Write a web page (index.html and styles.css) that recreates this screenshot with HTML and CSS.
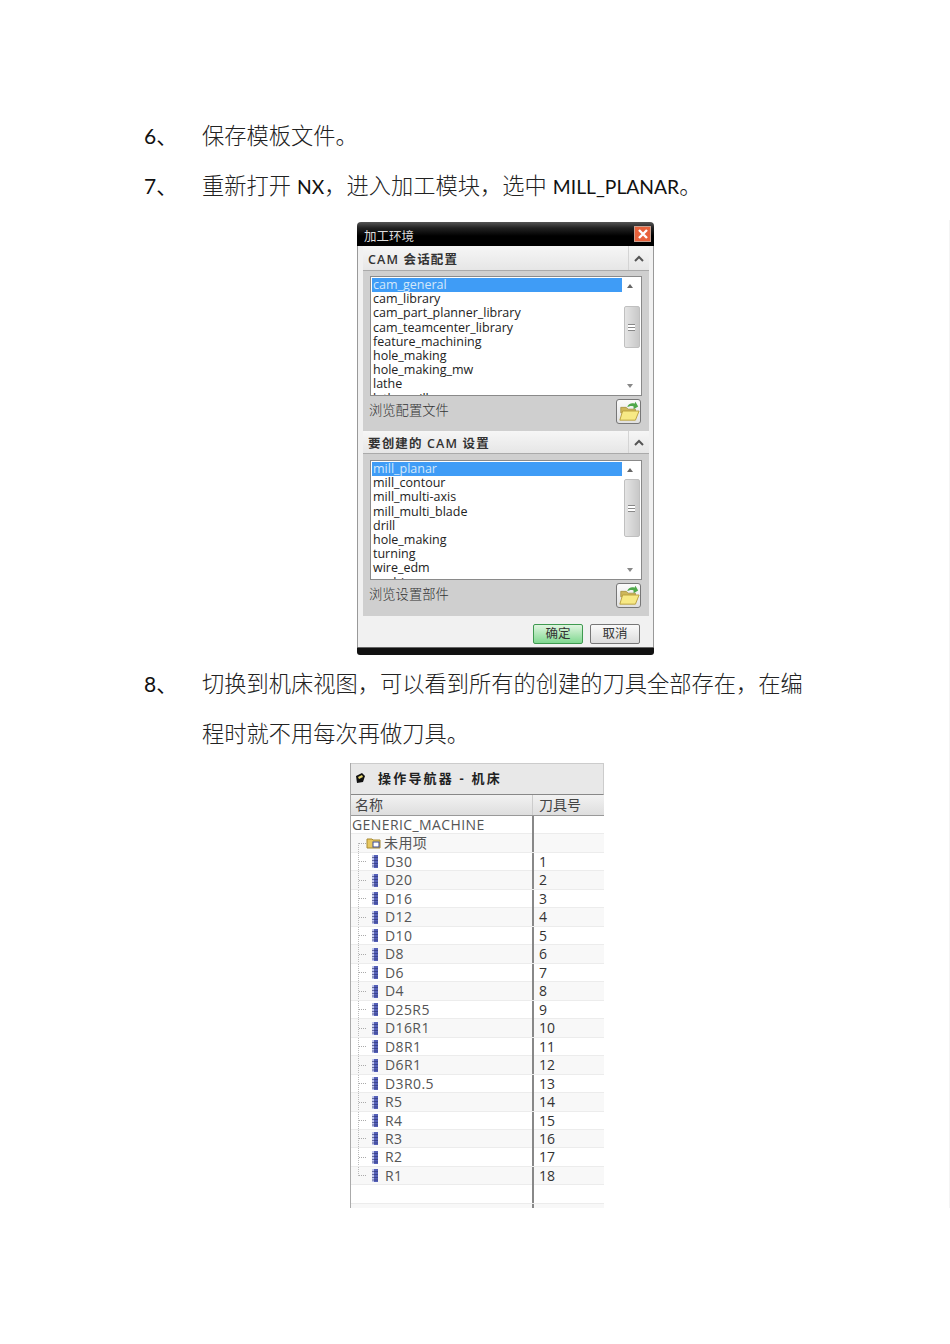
FILE: index.html
```html
<!DOCTYPE html>
<html lang="zh-CN">
<head>
    <meta charset="UTF-8">
    <title>保存模板文件</title>
    <link rel="stylesheet" href="styles.css">
</head>
<body>
<svg class="sprites" width="0" height="0">
    <symbol id="folder-open" viewBox="0 0 24 24">
        <path d="M3 8h6l2 2h8v4H3z" fill="#cdb65a" stroke="#a08a3a" stroke-width="0.8"/>
        <path d="M2 22 5 12h18l-4 10z" fill="#f7e985" stroke="#b89c3a" stroke-width="1"/>
        <path d="M10 8c1-4 5-5 8-4l1-2 3 5-5 3 0-3c-3-1-5 0-7 1z" fill="#4fa84a"/>
    </symbol>
    <symbol id="tool" viewBox="0 0 8 13" preserveAspectRatio="none">
        <rect x="1" y="0" width="6" height="13" fill="#5560b8"/>
        <rect x="1" y="0" width="2" height="13" fill="#c0c6ec"/>
        <path d="M1 2.5h6M1 5.5h6M1 8.5h6M1 11h6" stroke="#2a3070" stroke-width="0.6"/>
    </symbol>
</svg>

<main class="page">
    <div class="step"><span class="num">6、</span><p>保存模板文件。</p></div>
    <div class="step"><span class="num">7、</span><p>重新打开 <span class="latin">NX</span>，进入加工模块，选中 <span class="latin">MILL_PLANAR</span>。</p></div>

    <section class="dialog">
        <div class="titlebar">
            <span>加工环境</span>
            <span class="close">
                <svg width="10" height="10" viewBox="0 0 10 10"><path d="M1 1l8 8M9 1l-8 8" stroke="#fff" stroke-width="2.4"/></svg>
            </span>
        </div>
        <div class="dialog-body">
            <div class="group-head">
                <span>CAM 会话配置</span>
                <span class="chev"><svg width="10" height="7" viewBox="0 0 10 7"><path d="M1 6l4-4 4 4" fill="none" stroke="#555" stroke-width="2"/></svg></span>
            </div>
            <div class="group group-first">
                <div class="listbox">
                    <ul class="items">
                        <li class="selected">cam_general</li>
                        <li>cam_library</li>
                        <li>cam_part_planner_library</li>
                        <li>cam_teamcenter_library</li>
                        <li>feature_machining</li>
                        <li>hole_making</li>
                        <li>hole_making_mw</li>
                        <li>lathe</li>
                        <li>lathe_mill</li>
                    </ul>
                    <div class="scrollbar">
                        <i class="arrow up"></i>
                        <div class="thumb thumb-a"><b></b></div>
                        <i class="arrow down"></i>
                    </div>
                </div>
                <div class="browse">
                    <span>浏览配置文件</span>
                    <button class="folder-btn"><svg width="22" height="22"><use href="#folder-open"/></svg></button>
                </div>
            </div>

            <div class="group-head group-head-short">
                <span>要创建的 CAM 设置</span>
                <span class="chev"><svg width="10" height="7" viewBox="0 0 10 7"><path d="M1 6l4-4 4 4" fill="none" stroke="#555" stroke-width="2"/></svg></span>
            </div>
            <div class="group group-second">
                <div class="listbox">
                    <ul class="items">
                        <li class="selected">mill_planar</li>
                        <li>mill_contour</li>
                        <li>mill_multi-axis</li>
                        <li>mill_multi_blade</li>
                        <li>drill</li>
                        <li>hole_making</li>
                        <li>turning</li>
                        <li>wire_edm</li>
                        <li>probing</li>
                    </ul>
                    <div class="scrollbar">
                        <i class="arrow up"></i>
                        <div class="thumb thumb-b"><b></b></div>
                        <i class="arrow down"></i>
                    </div>
                </div>
                <div class="browse">
                    <span>浏览设置部件</span>
                    <button class="folder-btn"><svg width="22" height="22"><use href="#folder-open"/></svg></button>
                </div>
            </div>

            <div class="actions">
                <button class="btn btn-ok">确定</button>
                <button class="btn">取消</button>
            </div>
        </div>
        <div class="dialog-foot"></div>
    </section>

    <div class="step step-tall">
        <span class="num">8、</span>
        <p>切换到机床视图，可以看到所有的创建的刀具全部存在，在编程时就不用每次再做刀具。</p>
    </div>

    <section class="navigator">
        <div class="nav-title">
            <svg width="12" height="12" viewBox="0 0 12 12"><path d="M2 4 8 1l3 3-2 6-6 1z" fill="#111"/><path d="M4 5l4-2 1 2-4 2z" fill="#e8d870"/></svg>
            <span>操作导航器 - 机床</span>
        </div>
        <div class="nav-cols"><span>名称</span><span>刀具号</span></div>
        <div class="tree">
            <div class="row"><span class="root">GENERIC_MACHINE</span><span></span></div>
            <div class="row"><span class="leaf leaf-first"><svg width="15" height="12" viewBox="0 0 15 12"><path d="M1 2h5l1 1h7v8H1z" fill="#e8c860" stroke="#a88a30"/><rect x="7" y="5" width="6" height="5" fill="#fff" stroke="#3a4a9a"/></svg>未用项</span><span></span></div>
            <div class="row"><span class="leaf"><svg class="tool" width="8" height="13"><use href="#tool"/></svg>D30</span><span>1</span></div>
            <div class="row"><span class="leaf"><svg class="tool" width="8" height="13"><use href="#tool"/></svg>D20</span><span>2</span></div>
            <div class="row"><span class="leaf"><svg class="tool" width="8" height="13"><use href="#tool"/></svg>D16</span><span>3</span></div>
            <div class="row"><span class="leaf"><svg class="tool" width="8" height="13"><use href="#tool"/></svg>D12</span><span>4</span></div>
            <div class="row"><span class="leaf"><svg class="tool" width="8" height="13"><use href="#tool"/></svg>D10</span><span>5</span></div>
            <div class="row"><span class="leaf"><svg class="tool" width="8" height="13"><use href="#tool"/></svg>D8</span><span>6</span></div>
            <div class="row"><span class="leaf"><svg class="tool" width="8" height="13"><use href="#tool"/></svg>D6</span><span>7</span></div>
            <div class="row"><span class="leaf"><svg class="tool" width="8" height="13"><use href="#tool"/></svg>D4</span><span>8</span></div>
            <div class="row"><span class="leaf"><svg class="tool" width="8" height="13"><use href="#tool"/></svg>D25R5</span><span>9</span></div>
            <div class="row"><span class="leaf"><svg class="tool" width="8" height="13"><use href="#tool"/></svg>D16R1</span><span>10</span></div>
            <div class="row"><span class="leaf"><svg class="tool" width="8" height="13"><use href="#tool"/></svg>D8R1</span><span>11</span></div>
            <div class="row"><span class="leaf"><svg class="tool" width="8" height="13"><use href="#tool"/></svg>D6R1</span><span>12</span></div>
            <div class="row"><span class="leaf"><svg class="tool" width="8" height="13"><use href="#tool"/></svg>D3R0.5</span><span>13</span></div>
            <div class="row"><span class="leaf"><svg class="tool" width="8" height="13"><use href="#tool"/></svg>R5</span><span>14</span></div>
            <div class="row"><span class="leaf"><svg class="tool" width="8" height="13"><use href="#tool"/></svg>R4</span><span>15</span></div>
            <div class="row"><span class="leaf"><svg class="tool" width="8" height="13"><use href="#tool"/></svg>R3</span><span>16</span></div>
            <div class="row"><span class="leaf"><svg class="tool" width="8" height="13"><use href="#tool"/></svg>R2</span><span>17</span></div>
            <div class="row"><span class="leaf leaf-last"><svg class="tool" width="8" height="13"><use href="#tool"/></svg>R1</span><span>18</span></div>
            <div class="row"><span></span><span></span></div>
            <div class="row"><span></span><span></span></div>
        </div>
    </section>
</main>
</body>
</html>
```

FILE: styles.css
```css
* {
    box-sizing: border-box;
}

html, body {
    margin: 0;
    padding: 0;
    background: #fff;
}

body {
    font-family: 'Lato', 'Noto Sans CJK SC', sans-serif;
    color: #111;
    height: 1344px;
    overflow: hidden;
}

.sprites {
    position: absolute;
}

.page {
    padding: 111px 0 0 144px;
    width: 950px;
    height: 1344px;
    /* faint scan edge down the right side */
    background: linear-gradient(#f4f4f4, #f4f4f4) right 0 top 220px / 1px 988px no-repeat;
}

/* numbered text */
.step {
    display: grid;
    grid-template-columns: 58px 604px;
    font-size: 22.25px;
    line-height: 50px;
}

.step p {
    margin: 0;
    font-weight: 300;
    color: #222;
}

.latin {
    font-size: 19.3px;
    font-weight: 400;
    line-height: 1;
    color: #111;
}

.num {
    font-size: 21px;
}

.step-tall {
    margin-top: 4px;
}

/* dialog */
.dialog {
    width: 297px;
    height: 433px;
    margin: 11px 0 4px 213px;
    display: flex;
    flex-direction: column;
    font-family: 'Open Sans', 'Noto Sans CJK SC', sans-serif;
}

.titlebar {
    height: 24px;
    background: linear-gradient(#555 0, #222 6px, #000 14px);
    border-radius: 4px 4px 0 0;
    color: #ddd;
    font-size: 12.5px;
    padding: 4px 3px 0 7px;
    line-height: 22px;
    display: flex;
    justify-content: space-between;
    align-items: flex-start;
}

.close {
    width: 17px;
    height: 16px;
    background: #e8623c;
    border: 1px solid #c9a090;
    display: flex;
    align-items: center;
    justify-content: center;
}

.dialog-body {
    flex: 1;
    background: #f1f1f1;
    padding: 0 4px 0 5px;
    border-left: 1px solid #999;
    border-right: 1px solid #999;
    display: flex;
    flex-direction: column;
}

.group-head {
    height: 24px;
    display: flex;
    justify-content: space-between;
    align-items: center;
    padding-left: 5px;
    font-size: 12.5px;
    font-weight: 600;
    letter-spacing: 1.15px;
    color: #333;
    background: linear-gradient(#f6f6f6, #e6e6e6);
    flex-shrink: 0;
}

.group-head-short {
    height: 22px;
}

.chev {
    width: 21px;
    height: 100%;
    border-left: 1px solid #d4d4d4;
    display: flex;
    align-items: center;
    justify-content: center;
}

.group {
    background: #cfcfcf;
    border-top: 1px solid #aaa;
    padding: 5px 7px 0;
}

.group-first {
    height: 161px;
}

.group-second {
    height: 163px;
    padding-top: 6px;
}

.listbox {
    height: 120px;
    background: #fff;
    border: 1px solid #8a8a8a;
    display: flex;
    overflow: hidden;
}

.items {
    list-style: none;
    margin: 0;
    padding: 1px 0 0 1px;
    width: 251px;
    font-size: 12.5px;
    line-height: 14.2px;
    font-weight: 500;
    color: #222;
}

.items li {
    padding-left: 1px;
    white-space: nowrap;
}

.items .selected {
    background: #3f9cf6;
    color: #d4e8fa;
}

.scrollbar {
    flex: 1;
    position: relative;
    display: flex;
    flex-direction: column;
    align-items: center;
}

.arrow {
    position: absolute;
    left: 5px;
    border-left: 3px solid transparent;
    border-right: 3px solid transparent;
}

.arrow.up {
    top: 7px;
    border-bottom: 4px solid #666;
}

.arrow.down {
    bottom: 7px;
    border-top: 4px solid #888;
}

.thumb {
    width: 16px;
    background: linear-gradient(90deg, #e4e4e4, #c8c8c8);
    border: 1px solid #c0c0c0;
    border-radius: 2px;
    display: flex;
    align-items: center;
    justify-content: center;
}

.thumb b {
    display: block;
    width: 7px;
    height: 7px;
    border-top: 1px solid #888;
    border-bottom: 1px solid #888;
    background: linear-gradient(#fff 0 2px, #888 2px 3px, #fff 3px);
}

.thumb-a {
    height: 42px;
    margin-top: 29px;
}

.thumb-b {
    height: 58px;
    margin-top: 18px;
}

.browse {
    display: flex;
    justify-content: space-between;
    align-items: center;
    height: 30px;
    margin: 0 1px 0 -1px;
    font-size: 13.3px;
    font-weight: 300;
    color: #333;
}

.browse span {
    margin-bottom: 3px;
}

.folder-btn {
    width: 25px;
    height: 25px;
    padding: 0;
    background: linear-gradient(#fbfbfb, #e0e0e0);
    border: 1px solid #777;
    border-radius: 3px;
    display: flex;
    align-items: center;
    justify-content: center;
}

.actions {
    flex: 1;
    display: flex;
    justify-content: flex-end;
    align-items: center;
    gap: 7px;
    padding: 4px 9px 0 0;
}

.btn {
    width: 50px;
    height: 20px;
    padding: 0;
    font-family: inherit;
    font-size: 12.5px;
    line-height: 16px;
    color: #333;
    background: linear-gradient(#fafafa, #dcdcdc);
    border: 1px solid #777;
    border-radius: 2px;
}

.btn-ok {
    background: linear-gradient(#e0f5e0, #80d890);
    border-color: #3f9a50;
}

.dialog-foot {
    height: 8px;
    background: #111;
    border-top: 1px solid #666;
    border-radius: 0 0 3px 3px;
}

/* navigator */
.navigator {
    width: 254px;
    height: 445px;
    margin: 4px 0 0 206px;
    border-left: 1px solid #aaa;
    font-family: 'Open Sans', 'Noto Sans CJK SC', sans-serif;
    overflow: hidden;
}

.nav-title {
    height: 32px;
    background: #e8e8e8;
    border-top: 1px solid #ccc;
    border-right: 1px solid #ccc;
    border-bottom: 1px solid #888;
    display: flex;
    align-items: center;
    gap: 12px;
    padding: 0 0 3px 3px;
    font-size: 13px;
    font-weight: 700;
    letter-spacing: 2.2px;
    color: #222;
}

.nav-cols {
    height: 21px;
    display: grid;
    grid-template-columns: 181px 1fr;
    background: linear-gradient(#f2f2f2, #dedede);
    border-bottom: 1px solid #999;
    font-size: 14px;
    line-height: 20px;
    color: #444;
}

.nav-cols span {
    padding-left: 4px;
}

.nav-cols span + span {
    border-left: 1px solid #ccc;
    padding-left: 6px;
}

.tree {
    display: flex;
    flex-direction: column;
}

.row {
    flex: 0 0 18.47px;
    height: 18.47px;
    display: grid;
    grid-template-columns: 181px 1fr;
    font-size: 14px;
    line-height: 18px;
    color: #555;
    border-bottom: 1px solid #ececec;
}

.row:nth-child(even) {
    background: #f8f8f8;
}

.row span + span {
    border-left: 2px solid #888;
    padding-left: 5px;
    color: #333;
}

.root {
    padding-left: 1px;
    white-space: nowrap;
    letter-spacing: 0.4px;
}

/* dotted tree guides: one vertical, one stub per row */
.leaf {
    display: flex;
    align-items: center;
    padding-left: 20px;
    gap: 6px;
    letter-spacing: 0.4px;
    background-image:
        repeating-linear-gradient(#bbb 0 1px, transparent 1px 2px),
        repeating-linear-gradient(90deg, #aaa 0 1px, transparent 1px 2px);
    background-repeat: no-repeat;
    background-position: 7px 0, 8px 50%;
    background-size: 1px 100%, 8px 1px;
}

.leaf-first {
    background-position: 7px 100%, 8px 50%;
    background-size: 1px 50%, 8px 1px;
}

.leaf-last {
    background-size: 1px 50%, 8px 1px;
}

.leaf > svg:not(.tool) {
    margin-left: -5px;
    margin-right: -3px;
}
```
